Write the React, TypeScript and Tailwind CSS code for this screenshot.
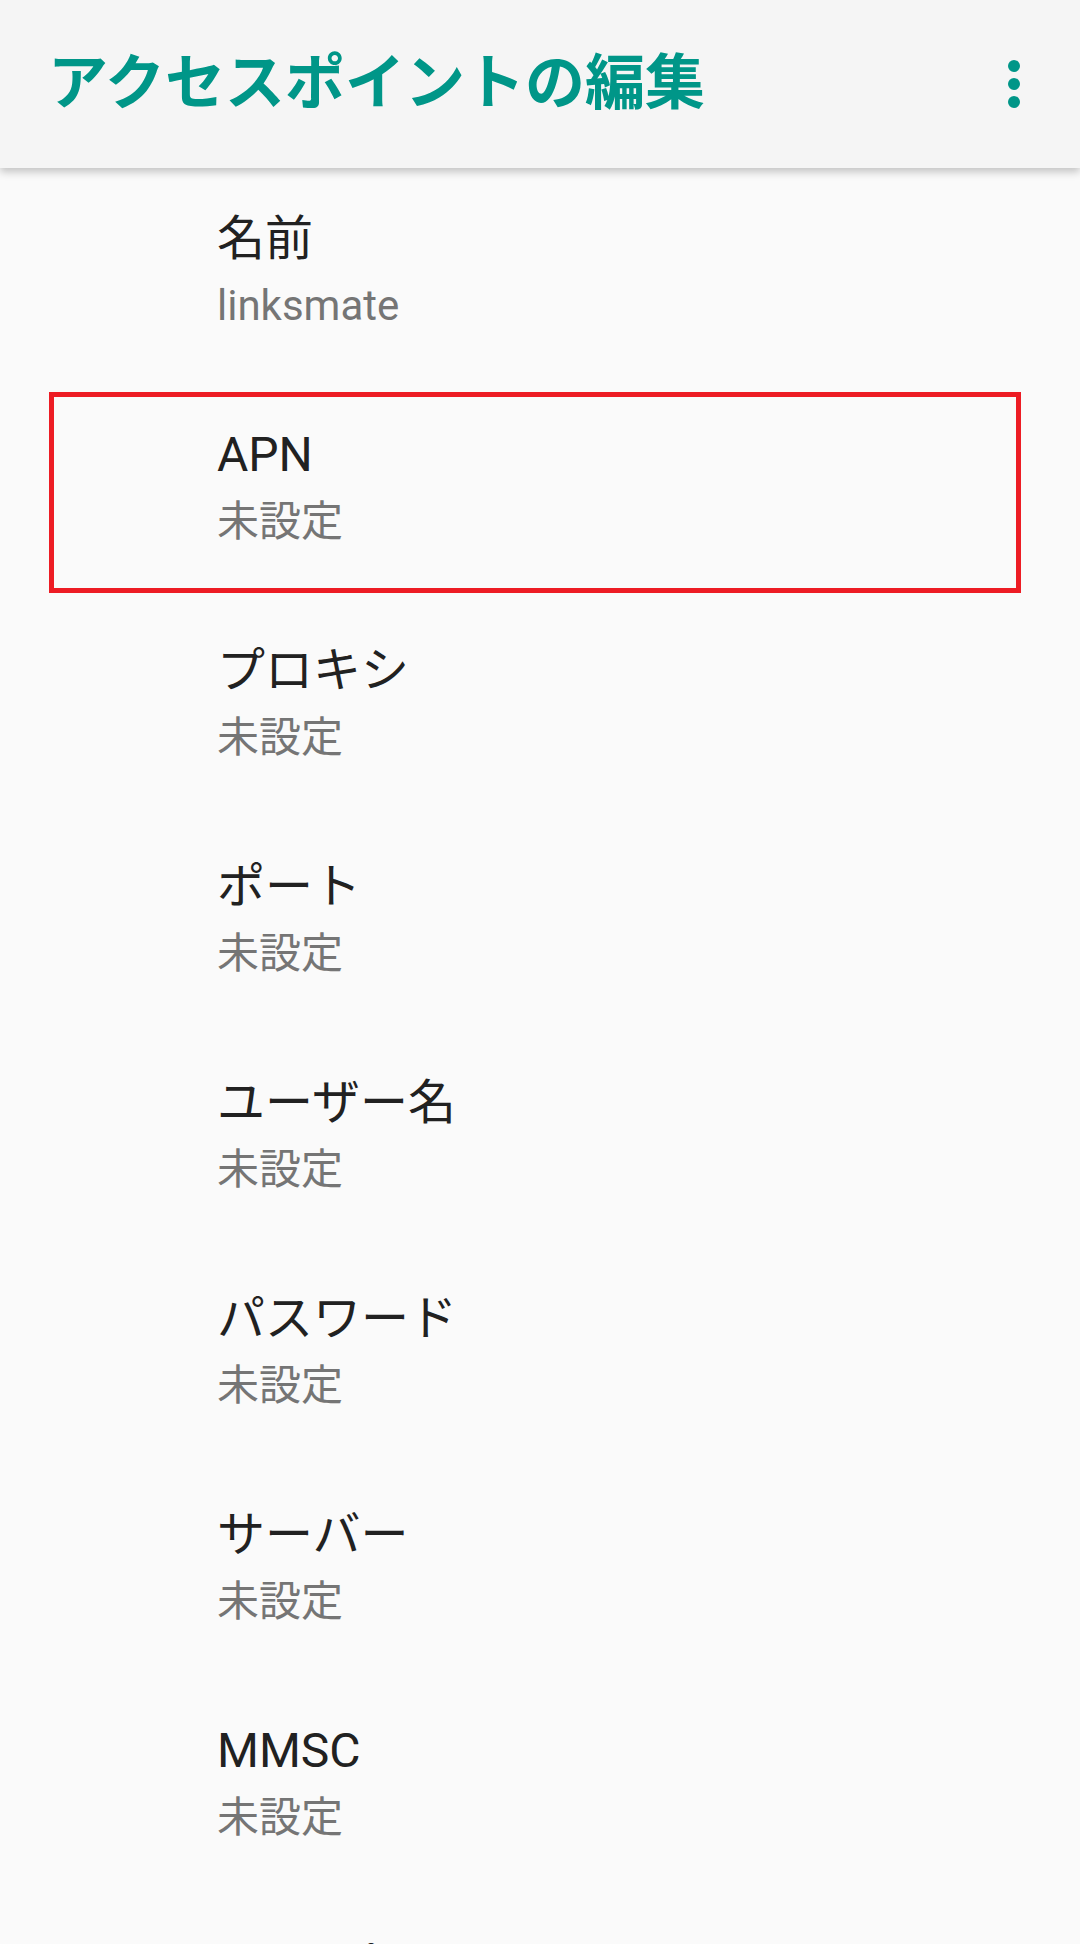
import React from 'react';

const items: { title: string; summary: string }[] = [
  { title: '名前', summary: 'linksmate' },
  { title: 'APN', summary: '未設定' },
  { title: 'プロキシ', summary: '未設定' },
  { title: 'ポート', summary: '未設定' },
  { title: 'ユーザー名', summary: '未設定' },
  { title: 'パスワード', summary: '未設定' },
  { title: 'サーバー', summary: '未設定' },
  { title: 'MMSC', summary: '未設定' },
  { title: 'MMSプロキシ', summary: '未設定' },
];

const MoreIcon = () => (
  <svg width="72" height="72" viewBox="0 0 24 24" fill="#009688">
    <circle cx="12" cy="6" r="2" />
    <circle cx="12" cy="12" r="2" />
    <circle cx="12" cy="18" r="2" />
  </svg>
);

export default function App() {
  return (
    <div className="w-[1080px] h-[1944px] overflow-hidden bg-[#fafafa] font-['Roboto','Noto_Sans_CJK_JP',sans-serif]">
      {/* toolbar */}
      <header className="relative z-10 h-[168px] bg-[#f5f5f5] flex items-center justify-between pl-[48px] pr-[30px] shadow-[0_4px_8px_rgba(0,0,0,0.22)]">
        <h1 className="text-[60px] leading-[80px] font-bold text-[#009688]">アクセスポイントの編集</h1>
        <MoreIcon />
      </header>

      <div className="flex flex-col">
        {items.map((item) => (
          <div key={item.title} className="relative h-[216px] shrink-0 pl-[217px] pt-[39px]">
            <div className="text-[48px] leading-[64px] text-[#212121]">{item.title}</div>
            <div className="mt-[7px] text-[42px] leading-[56px] text-[#757575]">{item.summary}</div>
            {item.title === 'APN' && (
              <div className="absolute top-[8px] left-[49px] w-[972px] h-[201px] border-[5px] border-[#ed1c24]" />
            )}
          </div>
        ))}
      </div>
    </div>
  );
}
